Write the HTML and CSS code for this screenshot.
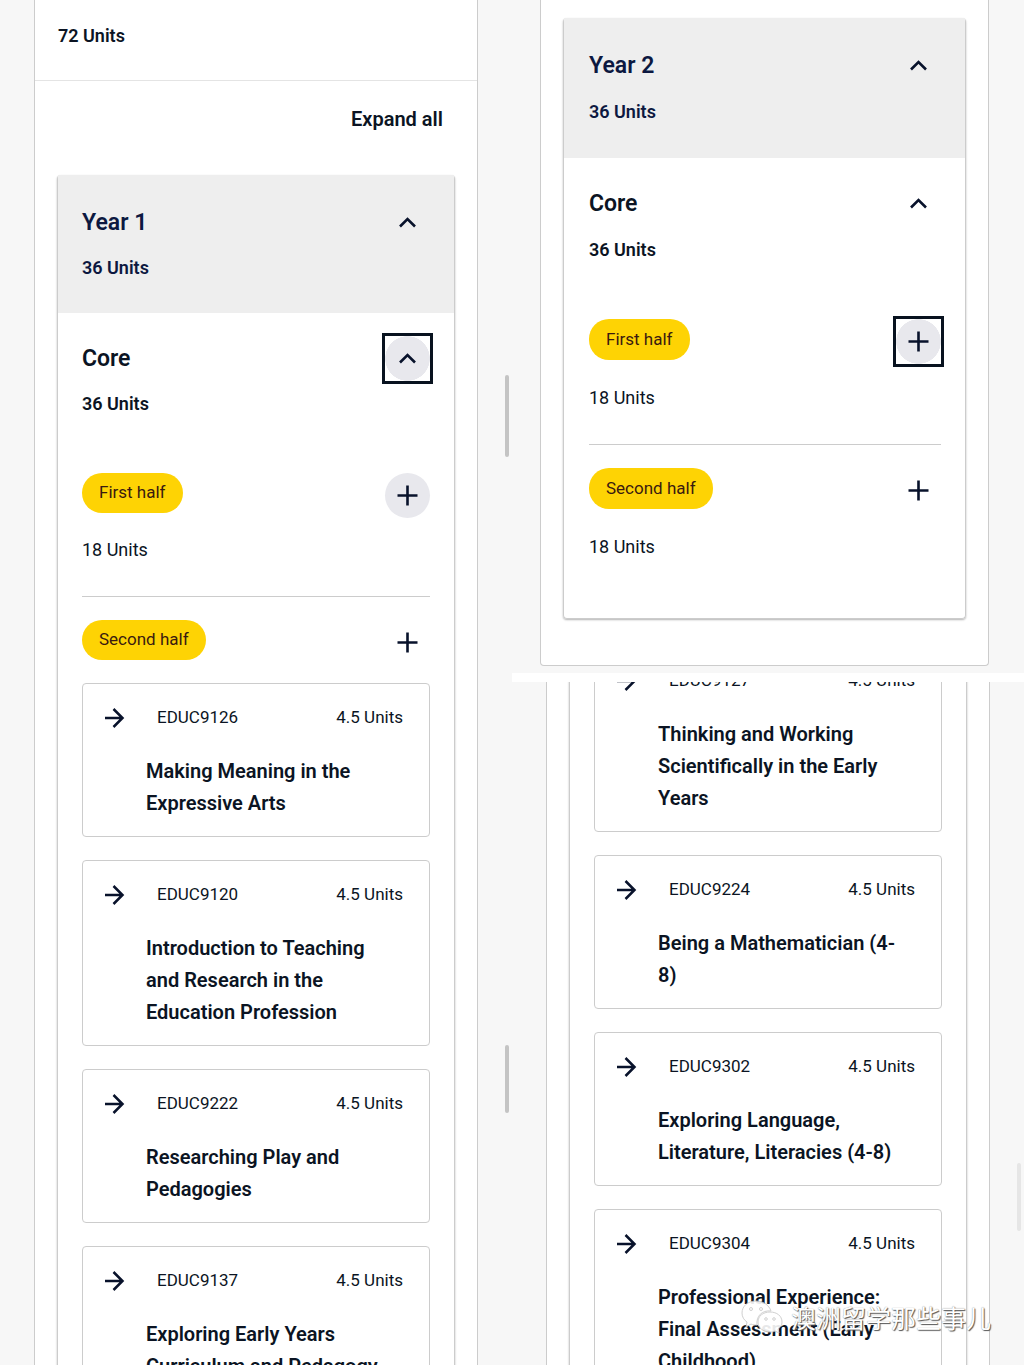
FILE: index.html
```html
<!DOCTYPE html>
<html lang="en">
<head>
    <meta charset="UTF-8">
    <meta name="viewport" content="width=device-width, initial-scale=1.0">
    <title>Course Structure</title>
    <link rel="stylesheet" href="styles.css">
</head>
<body>

<!-- Shared icons -->
<svg class="sprite" aria-hidden="true">
    <symbol id="icon-up" viewBox="0 0 24 24"><path d="M4 15.5 11.5 8 19 15.5"/></symbol>
    <symbol id="icon-plus" viewBox="0 0 24 24"><path d="M11.5 1.5v20M1.5 11.5h20"/></symbol>
    <symbol id="icon-arrow" viewBox="0 0 24 24"><path d="M2 13h18M10.5 4l9 9-9 9"/></symbol>
</svg>

<main class="page">
    <!-- Year 1 -->
    <section class="screen">
        <div class="panel">
            <p class="total units-bold">72 Units</p>
            <div class="toolbar">
                <button type="button" class="expand">Expand all</button>
            </div>
            <div class="accordion">
                <div class="group-head year">
                    <div>
                        <h2>Year 1</h2>
                        <p class="units-bold">36 Units</p>
                    </div>
                    <button type="button" class="toggle" aria-label="Collapse Year 1"><svg class="icon-up"><use href="#icon-up"/></svg></button>
                </div>
                <div class="group-head">
                    <div>
                        <h2>Core</h2>
                        <p class="units-bold">36 Units</p>
                    </div>
                    <button type="button" class="toggle active focused" aria-label="Collapse Core"><svg class="icon-up"><use href="#icon-up"/></svg></button>
                </div>
                <div class="half">
                    <div>
                        <span class="chip">First half</span>
                        <p class="units">18 Units</p>
                    </div>
                    <button type="button" class="toggle active" aria-label="Expand First half"><svg class="icon-plus"><use href="#icon-plus"/></svg></button>
                </div>
                <div class="half open">
                    <span class="chip">Second half</span>
                    <button type="button" class="toggle" aria-label="Expand Second half"><svg class="icon-plus"><use href="#icon-plus"/></svg></button>
                </div>
                <div class="courses">
                    <a href="#" class="course">
                        <div class="course-top">
                            <svg class="icon-arrow"><use href="#icon-arrow"/></svg>
                            <span class="code">EDUC9126</span>
                            <span>4.5 Units</span>
                        </div>
                        <h3>Making Meaning in the Expressive Arts</h3>
                    </a>
                    <a href="#" class="course">
                        <div class="course-top">
                            <svg class="icon-arrow"><use href="#icon-arrow"/></svg>
                            <span class="code">EDUC9120</span>
                            <span>4.5 Units</span>
                        </div>
                        <h3>Introduction to Teaching and Research in the Education Profession</h3>
                    </a>
                    <a href="#" class="course">
                        <div class="course-top">
                            <svg class="icon-arrow"><use href="#icon-arrow"/></svg>
                            <span class="code">EDUC9222</span>
                            <span>4.5 Units</span>
                        </div>
                        <h3>Researching Play and Pedagogies</h3>
                    </a>
                    <a href="#" class="course">
                        <div class="course-top">
                            <svg class="icon-arrow"><use href="#icon-arrow"/></svg>
                            <span class="code">EDUC9137</span>
                            <span>4.5 Units</span>
                        </div>
                        <h3>Exploring Early Years Curriculum and Pedagogy</h3>
                    </a>
                </div>
            </div>
        </div>
        <span class="scrollbar left-upper"></span>
        <span class="scrollbar left-lower"></span>
    </section>

    <div class="column">
        <!-- Year 2 -->
        <section class="screen year-two">
            <div class="panel">
                <div class="accordion">
                    <div class="group-head year">
                        <div>
                            <h2>Year 2</h2>
                            <p class="units-bold">36 Units</p>
                        </div>
                        <button type="button" class="toggle" aria-label="Collapse Year 2"><svg class="icon-up"><use href="#icon-up"/></svg></button>
                    </div>
                    <div class="group-head">
                        <div>
                            <h2>Core</h2>
                            <p class="units-bold">36 Units</p>
                        </div>
                        <button type="button" class="toggle" aria-label="Collapse Core"><svg class="icon-up"><use href="#icon-up"/></svg></button>
                    </div>
                    <div class="half">
                        <div>
                            <span class="chip">First half</span>
                            <p class="units">18 Units</p>
                        </div>
                        <button type="button" class="toggle active focused" aria-label="Expand First half"><svg class="icon-plus"><use href="#icon-plus"/></svg></button>
                    </div>
                    <div class="half last">
                        <div>
                            <span class="chip">Second half</span>
                            <p class="units">18 Units</p>
                        </div>
                        <button type="button" class="toggle" aria-label="Expand Second half"><svg class="icon-plus"><use href="#icon-plus"/></svg></button>
                    </div>
                </div>
            </div>
        </section>

        <!-- Rest of the course list, already scrolled -->
        <section class="screen scrolled">
            <div class="panel">
                <div class="accordion">
                    <div class="courses">
                        <a href="#" class="course">
                            <div class="course-top">
                                <svg class="icon-arrow"><use href="#icon-arrow"/></svg>
                                <span class="code">EDUC9127</span>
                                <span>4.5 Units</span>
                            </div>
                            <h3>Thinking and Working Scientifically in the Early Years</h3>
                        </a>
                        <a href="#" class="course">
                            <div class="course-top">
                                <svg class="icon-arrow"><use href="#icon-arrow"/></svg>
                                <span class="code">EDUC9224</span>
                                <span>4.5 Units</span>
                            </div>
                            <h3>Being a Mathematician (4-8)</h3>
                        </a>
                        <a href="#" class="course">
                            <div class="course-top">
                                <svg class="icon-arrow"><use href="#icon-arrow"/></svg>
                                <span class="code">EDUC9302</span>
                                <span>4.5 Units</span>
                            </div>
                            <h3>Exploring Language, Literature, Literacies (4-8)</h3>
                        </a>
                        <a href="#" class="course">
                            <div class="course-top">
                                <svg class="icon-arrow"><use href="#icon-arrow"/></svg>
                                <span class="code">EDUC9304</span>
                                <span>4.5 Units</span>
                            </div>
                            <h3>Professional Experience: Final Assessment (Early Childhood)</h3>
                        </a>
                    </div>
                </div>
            </div>
            <span class="scrollbar right-edge"></span>
            <div class="watermark" lang="zh">
                <svg viewBox="0 0 42 36" aria-hidden="true">
                    <path d="M15 2C7 2 1 7 1 14c0 4 2 7 5 9l-1 5 5-3c2 1 4 1 6 1-1-9 5-15 14-14C28 6 22 2 15 2z"/>
                    <path d="M29 13c-7 0-12 4-12 10s5 10 12 10c2 0 3 0 5-1l4 2-1-4c3-2 4-4 4-7 0-6-5-10-12-10z"/>
                    <circle cx="10" cy="10" r="1.5"/><circle cx="20" cy="10" r="1.5"/>
                    <circle cx="25" cy="20" r="1.3"/><circle cx="33" cy="20" r="1.3"/>
                </svg>
                <span>澳洲留学那些事儿</span>
            </div>
        </section>
    </div>
</main>

</body>
</html>
```

FILE: styles.css
```css
* {
    box-sizing: border-box;
}
body {
    margin: 0;
    font-family: Roboto, "Noto Sans CJK SC", sans-serif;
    font-size: 17px;
    line-height: 24px;
    color: #0b1423;
    background-color: #fff;
}
h2, h3, p {
    margin: 0;
}
.sprite {
    display: none;
}
svg {
    fill: none;
    stroke: #08122b;
}
.page {
    display: grid;
    grid-template-columns: 1fr 1fr;
    height: 100vh;
    overflow: hidden;
}
.column {
    display: flex;
    flex-direction: column;
    min-height: 0;
}
.screen {
    position: relative;
    padding: 0 34px;
    background-color: #f7f7f7;
    overflow: hidden;
}
.panel {
    padding: 0 22px;
    background-color: #fff;
    border: 1px solid #ccc;
    border-top: none;
}
.total {
    margin: 0 -22px;
    padding: 24px 23px 32px;
    border-bottom: 1px solid #e4e4e4;
}
.units-bold {
    font-size: 18px;
    font-weight: 600;
}
.toolbar {
    display: flex;
    justify-content: flex-end;
    padding: 22px 12px 40px;
}
.expand {
    padding: 0;
    border: none;
    background: none;
    font: 600 20px/32px Roboto, sans-serif;
    color: #0b1423;
    cursor: pointer;
}

/* Accordion */
.accordion {
    border: 1px solid #ccc;
    border-top: none;
    border-radius: 4px;
    box-shadow: 0 1px 2px rgba(0, 0, 0, 0.3);
}
.group-head {
    display: flex;
    justify-content: space-between;
    align-items: flex-start;
    padding: 30px 24px 34px;
}
.group-head.year {
    padding-top: 32px;
    padding-bottom: 33px;
    background-color: #eee;
    color: #0c1840;
}
.group-head h2 {
    margin-bottom: 17px;
    font-size: 23px;
    line-height: 32px;
    font-weight: 600;
}
.toggle {
    display: flex;
    flex: none;
    align-items: center;
    justify-content: center;
    width: 45px;
    height: 45px;
    padding: 0;
    border: none;
    border-radius: 50%;
    background: none;
    cursor: pointer;
}
.group-head .toggle {
    margin-top: -7px;
}
.toggle.active {
    background-color: #e8e8ed;
}
/* square focus ring around the round button */
.toggle.focused {
    width: 51px;
    height: 51px;
    margin: -3px;
    border: 3px solid #08121f;
    border-radius: 0;
    background: radial-gradient(circle closest-side, #e8e8ed 98%, #fff 100%);
}
.group-head .toggle.focused {
    margin-top: -10px;
}
.icon-up {
    width: 24px;
    height: 24px;
    stroke-width: 2.6;
}
.icon-plus {
    width: 24px;
    height: 24px;
    stroke-width: 2.6;
}
.half {
    display: flex;
    justify-content: space-between;
    align-items: flex-start;
    margin: 0 24px;
    padding: 23px 0 34px;
    border-bottom: 1px solid #ccc;
}
.half.open {
    padding-bottom: 18px;
    border-bottom: none;
}
.half.last {
    padding-bottom: 59px;
    border-bottom: none;
}
.chip {
    display: inline-block;
    padding: 7px 17px 9px;
    border-radius: 20px;
    background-color: #fed304;
    color: #3a1a10;
    vertical-align: top;
}
.units {
    margin-top: 25px;
    font-size: 18px;
}

/* Course cards */
.courses {
    display: flex;
    flex-direction: column;
    gap: 23px;
    padding: 0 24px 23px;
}
.course {
    padding: 21px 26px 17px 20px;
    border: 1px solid #ccc;
    border-radius: 4px;
    color: inherit;
    text-decoration: none;
}
.course-top {
    display: flex;
    align-items: center;
    margin-bottom: 26px;
}
.icon-arrow {
    width: 24px;
    height: 24px;
    margin-right: 30px;
    stroke-width: 2.5;
}
.code {
    flex: 1;
}
.course h3 {
    padding: 0 12px 0 43px;
    font-size: 20px;
    line-height: 32px;
    font-weight: 600;
}

/* Year 2 */
.year-two {
    flex: none;
    padding: 0 35px 7px 28px;
    border-bottom: 9px solid #fff;
}
.year-two .panel {
    padding: 18px 22px 46px;
    border-radius: 0 0 4px 4px;
}
.year-two .group-head {
    padding-left: 25px;
}
.year-two .group-head h2 {
    margin-bottom: 18px;
}
.year-two .group-head.year {
    padding-bottom: 34px;
}
.year-two .half {
    margin-left: 25px;
}
.year-two .chip {
    padding-top: 8px;
}
.year-two .units {
    margin-top: 26px;
}

.scrolled {
    flex: 1;
    min-height: 0;
}
.scrolled .panel {
    margin-top: -36px;
}

/* Overlays */
.scrollbar {
    position: absolute;
    right: 3px;
    width: 4px;
    border-radius: 2px;
    background-color: #c4c4c4;
}
.left-upper {
    top: 375px;
    height: 82px;
}
.left-lower {
    top: 1045px;
    height: 68px;
}
.right-edge {
    top: 481px;
    height: 68px;
    background-color: #e6e6e6;
}
.watermark {
    position: absolute;
    right: 33px;
    bottom: 30px;
    display: flex;
    align-items: center;
    gap: 8px;
    font-family: "Noto Sans CJK SC", sans-serif;
    font-size: 25px;
    line-height: 36px;
    color: #fff;
    text-shadow: 1px 1px 1px #555, 0 0 1px #888;
    white-space: nowrap;
}
.watermark svg {
    width: 42px;
    height: 36px;
    fill: #fff;
    stroke: #ccc;
    opacity: 0.9;
}
```
